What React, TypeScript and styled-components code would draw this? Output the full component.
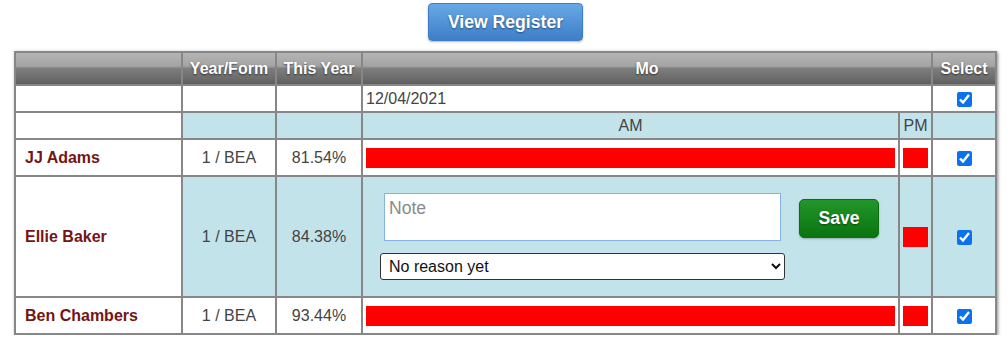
import React from "react";
import styled, { createGlobalStyle } from "styled-components";

// Styled
const GlobalStyle = createGlobalStyle`
  body {
    margin: 0;
    background: #fff;
    font-family: "Liberation Sans", Arial, sans-serif;
  }
`;
const Page = styled.main`
  display: flex;
  flex-direction: column;
  align-items: center;
  padding: 3px 0 0 4px;
`;
const ViewButton = styled.button`
  width: 155px;
  height: 38px;
  border: 1px solid #3f7ec4;
  border-radius: 4px;
  background: linear-gradient(#67a8e6, #3d7fc9);
  box-shadow: 0 1px 2px rgba(0, 0, 0, 0.3);
  color: #fff;
  font-family: "Liberation Sans", Arial, sans-serif;
  font-size: 17.6px;
  font-weight: 700;
  text-shadow: 0 1px 2px rgba(0, 0, 0, 0.45);
  cursor: pointer;
`;
const Register = styled.table`
  margin-top: 10px;
  width: 983px;
  table-layout: fixed;
  border-collapse: collapse;
  border: 2px solid #878787;
  box-shadow: 1px 1px 3px rgba(0, 0, 0, 0.45);
  font-size: 16px;
  color: #444;
`;
const HeadRow = styled.tr`
  height: 33px;
`;
const Row = styled.tr<{ $height: number }>`
  height: ${({ $height }) => $height}px;
`;
const HeadCell = styled.th`
  padding: 0;
  border: 2px solid #878787;
  background: linear-gradient(
    #b4b4b4 0%,
    #a4a4a4 42%,
    #7e7e7e 50%,
    #6a6a6a 85%,
    #5e5e5e 100%
  );
  color: #fff;
  font-size: 16px;
  font-weight: 700;
  text-shadow: 0 1px 2px rgba(0, 0, 0, 0.6);
  text-align: center;
`;
const Cell = styled.td<{ $blue?: boolean; $align?: "left" | "center" }>`
  padding: 0 3px;
  border: 2px solid #878787;
  background: ${({ $blue }) => ($blue ? "#c3e3eb" : "#fff")};
  text-align: ${({ $align }) => $align || "center"};
  vertical-align: middle;
`;
const Name = styled.span`
  display: block;
  padding-left: 6px;
  color: #741515;
  font-weight: 700;
  text-align: left;
`;
const Bar = styled.div`
  height: 20px;
  background: #ff0000;
`;
const Tick = styled.input`
  width: 15px;
  height: 15px;
  margin: 0;
  accent-color: #0a72ee;
  vertical-align: middle;
`;
const NoteForm = styled.div`
  display: flex;
  align-items: flex-start;
  gap: 14px;
  padding: 0 0 0 14px;
`;
const NoteFields = styled.div`
  display: flex;
  flex-direction: column;
  align-items: center;
  gap: 12px;
  width: 405px;
`;
const NoteBox = styled.textarea`
  box-sizing: border-box;
  width: 397px;
  height: 48px;
  padding: 4px 4px;
  border: 1px solid #86b3e6;
  border-radius: 0;
  resize: none;
  font-family: "Liberation Sans", Arial, sans-serif;
  font-size: 17.6px;
  &::placeholder {
    color: #8a8a8a;
  }
`;
const ReasonSelect = styled.select`
  box-sizing: border-box;
  width: 405px;
  height: 27px;
  padding: 0 4px;
  border: 1px solid #333;
  border-radius: 3px;
  background: #fff;
  color: #111;
  font-family: "Liberation Sans", Arial, sans-serif;
  font-size: 16px;
`;
const SaveButton = styled.button`
  margin-top: 6px;
  width: 80px;
  height: 39px;
  border: 1px solid #0d6f0d;
  border-radius: 5px;
  background: linear-gradient(#22962a, #0a7410);
  box-shadow: 0 1px 2px rgba(0, 0, 0, 0.25);
  color: #fff;
  font-family: "Liberation Sans", Arial, sans-serif;
  font-size: 17.6px;
  font-weight: 700;
  text-shadow: 0 1px 2px rgba(0, 0, 0, 0.45);
  cursor: pointer;
`;

// Data
interface Pupil {
  name: string;
  form: string;
  rate: string;
  editing?: boolean;
}

const pupils: Pupil[] = [
  { name: "JJ Adams", form: "1 / BEA", rate: "81.54%" },
  { name: "Ellie Baker", form: "1 / BEA", rate: "84.38%", editing: true },
  { name: "Ben Chambers", form: "1 / BEA", rate: "93.44%" },
];

const App = () => {
  return (
    <>
      <GlobalStyle />
      <Page>
        <ViewButton>View Register</ViewButton>
        <Register>
          <colgroup>
            <col style={{ width: 167 }} />
            <col style={{ width: 94 }} />
            <col style={{ width: 86 }} />
            <col style={{ width: 537 }} />
            <col style={{ width: 33 }} />
            <col style={{ width: 64 }} />
          </colgroup>
          <thead>
            <HeadRow>
              <HeadCell />
              <HeadCell>Year/Form</HeadCell>
              <HeadCell>This Year</HeadCell>
              <HeadCell colSpan={2}>Mo</HeadCell>
              <HeadCell>Select</HeadCell>
            </HeadRow>
          </thead>
          <tbody>
            <Row $height={27}>
              <Cell />
              <Cell />
              <Cell />
              <Cell colSpan={2} $align="left">
                12/04/2021
              </Cell>
              <Cell>
                <Tick type="checkbox" defaultChecked />
              </Cell>
            </Row>
            <Row $height={27}>
              <Cell />
              <Cell $blue />
              <Cell $blue />
              <Cell $blue>AM</Cell>
              <Cell $blue>PM</Cell>
              <Cell $blue />
            </Row>
            {pupils.map((p) => (
              <Row key={p.name} $height={p.editing ? 121 : 37}>
                <Cell $align="left">
                  <Name>{p.name}</Name>
                </Cell>
                <Cell $blue={p.editing}>{p.form}</Cell>
                <Cell $blue={p.editing}>{p.rate}</Cell>
                <Cell $blue={p.editing} $align="left">
                  {p.editing ? (
                    <NoteForm>
                      <NoteFields>
                        <NoteBox placeholder="Note" />
                        <ReasonSelect defaultValue="none">
                          <option value="none">No reason yet</option>
                        </ReasonSelect>
                      </NoteFields>
                      <SaveButton>Save</SaveButton>
                    </NoteForm>
                  ) : (
                    <Bar />
                  )}
                </Cell>
                <Cell $blue={p.editing}>
                  <Bar />
                </Cell>
                <Cell $blue={p.editing}>
                  <Tick type="checkbox" defaultChecked />
                </Cell>
              </Row>
            ))}
          </tbody>
        </Register>
      </Page>
    </>
  );
};

export default App;
